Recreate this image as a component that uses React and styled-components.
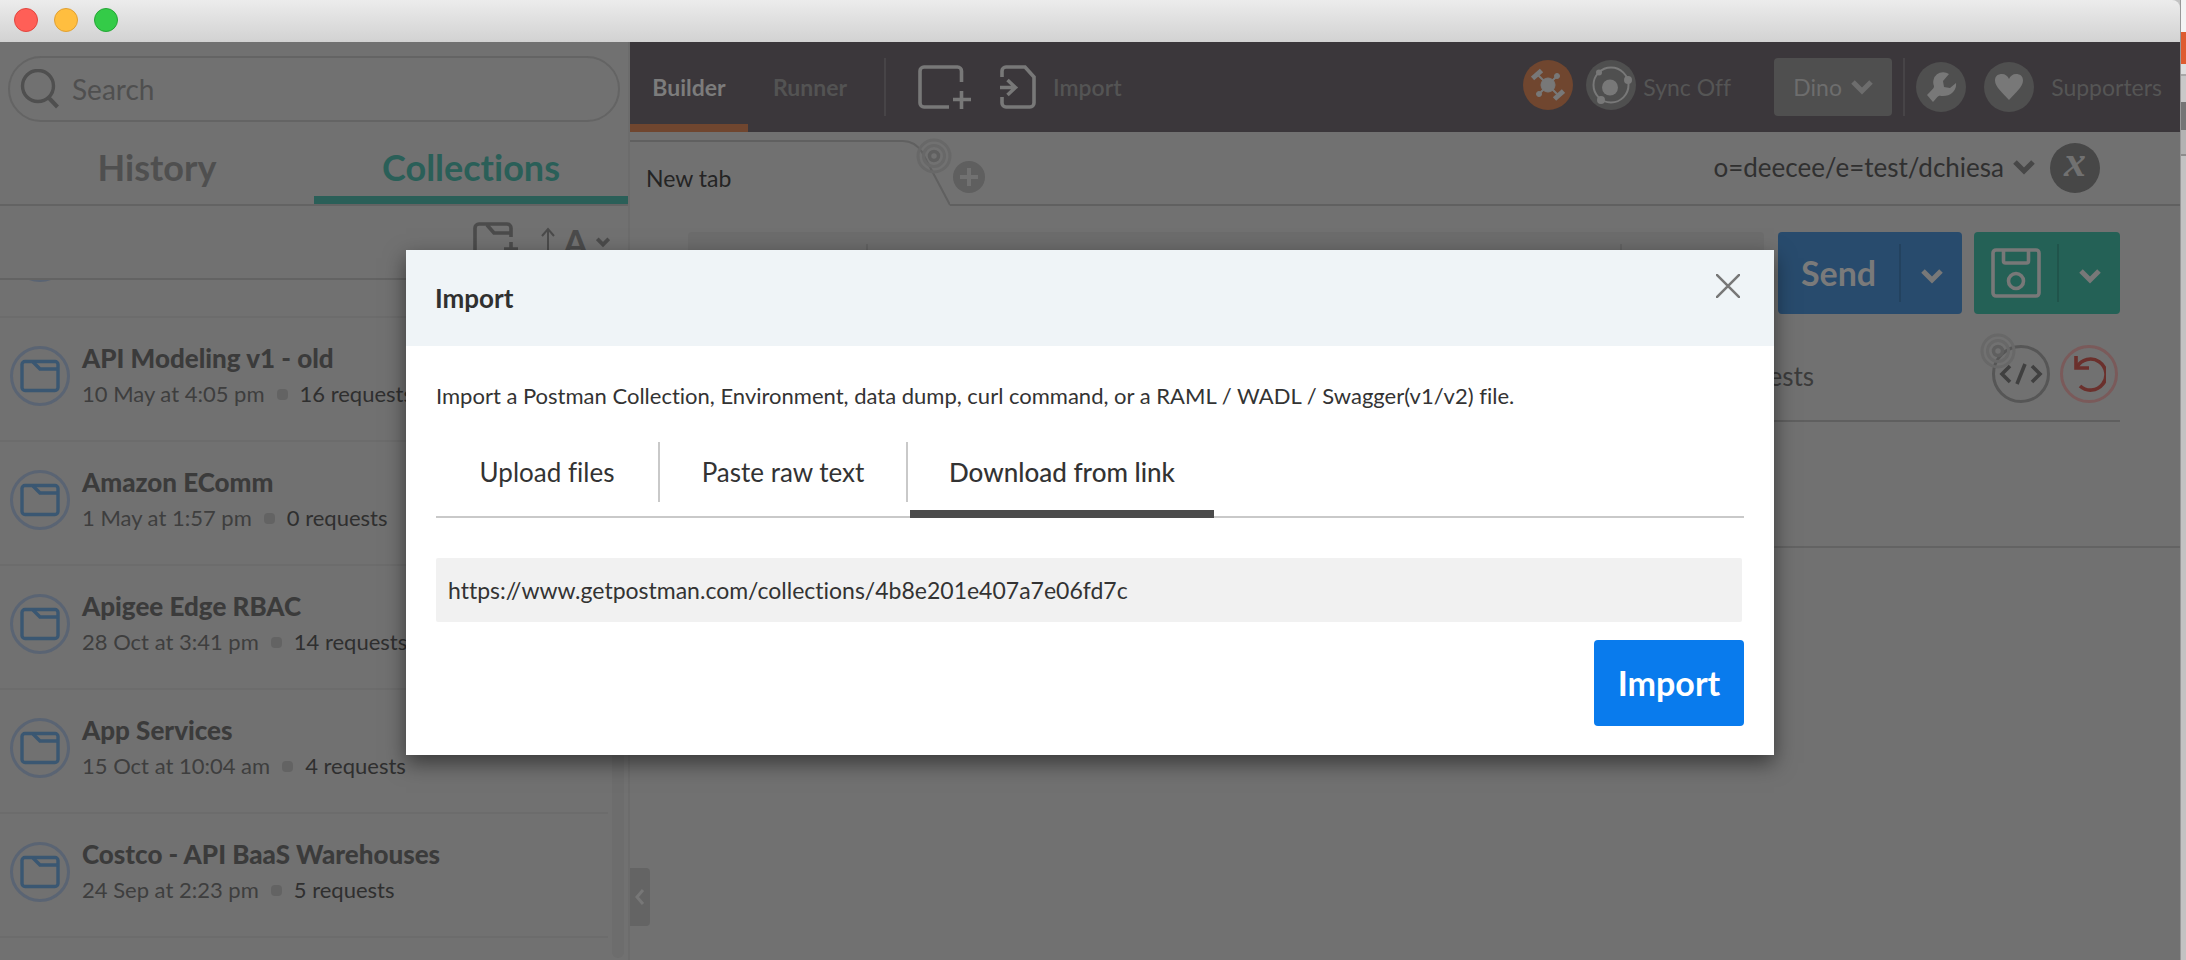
import React, { useLayoutEffect, useRef } from 'react';
import styled, { createGlobalStyle } from 'styled-components';

const Global = createGlobalStyle`
  * { box-sizing: border-box; }
  html, body { margin: 0; height: 100%; }
  #root { height: 100%; }
  body { font-family: Lato, "Liberation Sans", sans-serif; font-variant-ligatures: none; background: #c2c2c2; color: #333; }
  button, input, select { font: inherit; font-variant-ligatures: inherit; color: inherit; margin: 0; }
  button { border: 0; padding: 0; background: none; display: flex; align-items: center; justify-content: center; }
  svg { display: block; flex: none; }
  h1, h2, h3, p, ul { margin: 0; padding: 0; }
`;

const Desktop = styled.div`
  display: flex;
  height: 100%;
  min-height: 800px;
  overflow: hidden;
`;
const Window = styled.div`
  position: relative;
  flex: 1;
  min-width: 0;
  display: flex;
  flex-direction: column;
`;
const Behind = styled.div`
  width: 6px;
  flex: none;
  display: flex;
  flex-direction: column;
  border-left: 1px solid #989898;
`;
const Strip = styled.div`
  height: ${(p) => p.$h}px;
  background: ${(p) => p.$c};
`;

const TitleBar = styled.header`
  height: 42px;
  flex: none;
  display: flex;
  align-items: center;
  gap: 16px;
  padding: 0 14px 2px;
  background: linear-gradient(#ececec, #d2d2d2);
  border-top-right-radius: 8px;
`;
const Light = styled.button`
  width: 24px;
  height: 24px;
  border-radius: 50%;
  background: ${(p) => p.$fill};
  border: 1px solid ${(p) => p.$edge};
`;

const Body = styled.div`
  flex: 1;
  min-height: 0;
  display: flex;
  background: #717171;
`;

const Sidebar = styled.aside`
  width: 630px;
  flex: none;
  display: flex;
  flex-direction: column;
  border-right: 2px solid #6c6c6c;
`;
const SearchBox = styled.label`
  height: 66px;
  flex: none;
  margin: 14px 8px 0;
  padding: 0 10px;
  display: flex;
  align-items: center;
  gap: 12px;
  border: 2px solid #646464;
  border-radius: 33px;
  input {
    flex: 1;
    min-width: 0;
    border: 0;
    padding: 0;
    background: none;
    outline: none;
    font-size: 28px;
    line-height: 36px;
  }
  input::placeholder { color: #4f4f4f; opacity: 1; }
`;
const SideTabs = styled.nav`
  height: 84px;
  flex: none;
  display: flex;
  border-bottom: 2px solid #636363;
`;
const SideTab = styled.button`
  flex: 1;
  font-size: 36px;
  line-height: 40px;
  font-weight: 700;
  padding-top: 16px;
  color: ${(p) => (p.$active ? '#2a5f58' : '#4f4f4f')};
  border-bottom: 8px solid ${(p) => (p.$active ? '#2a5f58' : 'transparent')};
`;
const SideTools = styled.div`
  height: 74px;
  flex: none;
  display: flex;
  justify-content: flex-end;
  align-items: center;
  gap: 22px;
  padding-right: 18px;
  border-bottom: 2px solid #636363;
`;
const SortButton = styled.button`
  gap: 8px;
  color: #4b4b4b;
  font-size: 36px;
  font-weight: 700;
  line-height: 40px;
`;
const ListArea = styled.div`
  flex: 1;
  min-height: 0;
  display: flex;
  gap: 4px;
  padding-right: 4px;
`;
const List = styled.ul`
  flex: 1;
  overflow: hidden;
  list-style: none;
`;
const Track = styled.div`
  width: 12px;
  margin-bottom: 2px;
  border-radius: 6px;
  background: #6d6d6d;
`;
const Row = styled.li`
  height: 124px;
  display: flex;
  align-items: center;
  gap: 12px;
  padding: 0 10px 6px;
  border-bottom: 2px solid #6c6c6c;
`;
const FolderBadge = styled.span`
  width: 60px;
  height: 60px;
  flex: none;
  display: flex;
  align-items: center;
  justify-content: center;
  border: 3px solid #5a6473;
  border-radius: 50%;
`;
const RowText = styled.div`
  display: flex;
  flex-direction: column;
  gap: 4px;
`;
const RowTitle = styled.h3`
  font-size: 26px;
  line-height: 32px;
  font-weight: 900;
  color: #3b3b3b;
  white-space: nowrap;
`;
const RowMeta = styled.p`
  display: flex;
  align-items: center;
  gap: 12px;
  font-size: 22px;
  line-height: 32px;
  color: #3e3e3e;
  white-space: nowrap;
  i { width: 11px; height: 11px; border-radius: 4px; background: #636363; }
  span:last-child { color: #2f2f2f; }
`;

const Main = styled.main`
  position: relative;
  flex: 1;
  min-width: 0;
  display: flex;
  flex-direction: column;
`;
const TopBar = styled.div`
  height: 90px;
  flex: none;
  display: flex;
  align-items: center;
  background: #3b373b;
  font-size: 23px;
  line-height: 32px;
  color: #555;
`;
const ModeTab = styled.button`
  align-self: stretch;
  width: ${(p) => p.$w}px;
  font-weight: 700;
  padding-top: 8px;
  color: ${(p) => (p.$active ? '#7c7c7c' : '#535353')};
  border-bottom: 8px solid ${(p) => (p.$active ? '#70462f' : 'transparent')};
`;
const Rule = styled.span`
  width: 2px;
  height: 58px;
  flex: none;
  margin-left: ${(p) => p.$ml || 0}px;
  background: ${(p) => p.$c || '#474447'};
`;
const ToolButton = styled.button`
  margin-left: ${(p) => p.$ml || 0}px;
  gap: 17px;
  font-weight: 600;
  color: #545454;
`;
const Spacer = styled.span`
  flex: 1;
`;
const StatusIcons = styled.div`
  display: flex;
  gap: 13px;
  padding-bottom: 4px;
`;
const Round = styled.button`
  width: 50px;
  height: 50px;
  flex: none;
  margin-left: ${(p) => p.$ml || 0}px;
  border-radius: 50%;
  background: ${(p) => p.$c};
`;
const VarGlyph = styled.span`
  font-family: "Liberation Serif", serif;
  font-size: 44px;
  line-height: 44px;
  font-weight: 700;
  font-style: italic;
  color: #717171;
  padding-bottom: 12px;
`;
const BarText = styled.span`
  margin-left: ${(p) => p.$ml}px;
  margin-right: ${(p) => p.$mr}px;
  white-space: nowrap;
`;
const UserButton = styled.button`
  width: 118px;
  height: 58px;
  gap: 9px;
  margin-right: 11px;
  border-radius: 4px;
  background: #4f4f4f;
  color: #6d6d6d;
`;

const TabRow = styled.div`
  height: 74px;
  flex: none;
  display: flex;
  align-items: stretch;
`;
const RequestTab = styled.div`
  position: relative;
  width: 320px;
  flex: none;
  display: flex;
  align-items: center;
  padding: 18px 16px 0;
  font-size: 23px;
  line-height: 32px;
  color: #242424;
`;
const TabOutline = styled.svg`
  position: absolute;
  left: 0;
  top: 0;
`;
const TabRest = styled.div`
  flex: 1;
  display: flex;
  align-items: center;
  padding: 0 80px 0 3px;
  border-bottom: 2px solid #606060;
`;
const AddTab = styled.button`
  width: 32px;
  height: 32px;
  margin-top: 18px;
  border-radius: 50%;
  background: #5f5f5f;
`;
const EnvPicker = styled.button`
  gap: 9px;
  font-size: 26px;
  line-height: 32px;
  color: #303030;
  margin-right: 15px;
  padding-bottom: 2px;
`;

const RequestRow = styled.div`
  display: flex;
  gap: 12px;
  padding: 26px 60px 0 58px;
`;
const UrlBar = styled.div`
  flex: 1;
  height: 82px;
  display: flex;
  align-items: center;
  justify-content: space-between;
  padding: 0 142px 0 178px;
  margin-right: 2px;
  border-radius: 4px;
  background: #6c6c6c;
`;
const Split = styled.div`
  height: 82px;
  display: flex;
  align-items: center;
  border-radius: 4px;
  background: ${(p) => p.$c};
  color: #7a7a7a;
`;
const SplitMain = styled.button`
  align-self: stretch;
  width: ${(p) => p.$w}px;
  font-size: 34px;
  line-height: 40px;
  font-weight: 700;
`;
const SplitMore = styled.button`
  align-self: stretch;
  width: 61px;
  padding-top: 6px;
`;
const SubTabs = styled.div`
  height: 108px;
  flex: none;
  display: flex;
  align-items: center;
  gap: 10px;
  margin: 0 60px 0 58px;
  padding-right: 2px;
  padding-top: 14px;
  border-bottom: 2px solid #5f5f5f;
`;
const SubTab = styled.button`
  margin-right: 168px;
  padding-top: 4px;
  font-size: 26px;
  line-height: 32px;
  color: #3b3b3b;
`;
const Outline = styled.button`
  position: relative;
  width: 58px;
  height: 58px;
  border-radius: 50%;
  border: 3px solid ${(p) => p.$c};
`;
const Beacon = styled.span`
  position: absolute;
  left: ${(p) => p.$x}px;
  top: ${(p) => p.$y}px;
`;
const AuthArea = styled.div`
  height: 126px;
  flex: none;
  border-bottom: 2px solid #636363;
`;
const Handle = styled.button`
  position: absolute;
  left: 0;
  bottom: 34px;
  width: 20px;
  height: 58px;
  border-radius: 0 4px 4px 0;
  background: #646464;
`;

const Dialog = styled.section`
  position: absolute;
  left: 406px;
  right: 406px;
  top: 250px;
  display: flex;
  flex-direction: column;
  background: #fff;
  box-shadow: 0 8px 20px rgba(0, 0, 0, 0.5);
`;
const DialogHead = styled.header`
  height: 96px;
  display: flex;
  justify-content: space-between;
  align-items: flex-start;
  padding: 24px 34px 0 29px;
  background: #eff4f7;
  h2 { font-size: 26px; line-height: 32px; font-weight: 700; color: #303030; padding-top: 8px; }
`;
const DialogBody = styled.form`
  display: flex;
  flex-direction: column;
  padding: 34px 30px 29px;
  color: #333;
`;
const Intro = styled.p`
  font-size: 22px;
  line-height: 32px;
`;
const DialogTabs = styled.nav`
  height: 76px;
  margin-top: 30px;
  display: flex;
  align-items: flex-start;
  border-bottom: 2px solid #c9c9c9;
`;
const DialogTab = styled.button`
  width: ${(p) => p.$w}px;
  height: ${(p) => (p.$active ? 76 : 60)}px;
  font-size: 26px;
  line-height: 32px;
  font-weight: ${(p) => (p.$active ? 500 : 400)};
  border-bottom: ${(p) => (p.$active ? '8px solid #4b4b4b' : '0')};
  padding-bottom: ${(p) => (p.$active ? 8 : 0)}px;
  border-right: ${(p) => (p.$active ? '0' : '2px solid #c9c9c9')};
  margin-left: ${(p) => (p.$active ? 2 : 0)}px;
`;
const LinkField = styled.div`
  display: flex;
  padding: 40px 2px 18px 0;
  input {
    flex: 1;
    height: 64px;
    padding: 0 12px;
    border: 0;
    border-radius: 2px;
    outline: none;
    background: #f1f1f1;
    font-size: 23px;
  }
`;
const Submit = styled.button`
  align-self: flex-end;
  width: 150px;
  height: 86px;
  border-radius: 4px;
  background: #097bed;
  color: #fff;
  font-size: 34px;
  line-height: 40px;
  font-weight: 700;
`;

const Chevron = ({ c, w = 22, s = 5 }) => (
  <svg width={w} height="16" viewBox="0 0 22 16" fill="none" stroke={c} strokeWidth={s}>
    <path d="M2 3l9 9 9-9" />
  </svg>
);
const Folder = () => (
  <svg width="40" height="34" viewBox="0 0 40 34" fill="none" stroke="#3a5772" strokeWidth="3.4">
    <rect x="2" y="2.5" width="36" height="29" rx="3" />
    <path d="M13 3l7 7h18" />
  </svg>
);
const Rings = () => (
  <svg width="36" height="36" viewBox="0 0 36 36" fill="none" stroke="#686868" strokeWidth="3">
    <circle cx="18" cy="18" r="16" />
    <circle cx="18" cy="18" r="10.5" />
    <circle cx="18" cy="18" r="4.5" stroke="#5f5f5f" strokeWidth="3.5" />
  </svg>
);

const collections = [
  { title: 'API Modeling v1 - old', date: '10 May at 4:05 pm', count: '16 requests' },
  { title: 'Amazon EComm', date: '1 May at 1:57 pm', count: '0 requests' },
  { title: 'Apigee Edge RBAC', date: '28 Oct at 3:41 pm', count: '14 requests' },
  { title: 'App Services', date: '15 Oct at 10:04 am', count: '4 requests' },
  { title: 'Costco - API BaaS Warehouses', date: '24 Sep at 2:23 pm', count: '5 requests' },
];

function CollectionList() {
  const ref = useRef(null);
  useLayoutEffect(() => {
    ref.current.scrollTop = 86;
  }, []);
  return (
    <ListArea>
      <List ref={ref}>
        <Row><FolderBadge><Folder /></FolderBadge></Row>
        {collections.map((c) => (
          <Row key={c.title}>
            <FolderBadge><Folder /></FolderBadge>
            <RowText>
              <RowTitle>{c.title}</RowTitle>
              <RowMeta><span>{c.date}</span><i /><span>{c.count}</span></RowMeta>
            </RowText>
          </Row>
        ))}
        <Row />
      </List>
      <Track />
    </ListArea>
  );
}

function SidebarPanel() {
  return (
    <Sidebar>
      <SearchBox>
        <svg width="40" height="40" viewBox="0 0 40 40" fill="none" stroke="#4f4f4f">
          <circle cx="18" cy="17" r="15.5" strokeWidth="3.4" />
          <path d="M28 28l9.500 10" strokeWidth="4" />
        </svg>
        <input type="text" placeholder="Search" aria-label="Search" />
      </SearchBox>
      <SideTabs>
        <SideTab>History</SideTab>
        <SideTab $active>Collections</SideTab>
      </SideTabs>
      <SideTools>
        <button aria-label="New collection">
          <svg width="46" height="40" viewBox="0 0 46 40" fill="none" stroke="#4b4b4b" strokeWidth="3.6">
            <path d="M38 15V6a4 4 0 0 0-4-4H6a4 4 0 0 0-4 4v28a4 4 0 0 0 4 4h20M14 3l7 8h16M38 20v14M31 27h14" />
          </svg>
        </button>
        <SortButton aria-label="Sort">
          <svg width="14" height="34" viewBox="0 0 14 34" fill="none" stroke="#4b4b4b" strokeWidth="2">
            <path d="M7 34V4M1 11l6-7 6 7" />
          </svg>
          <span>A</span>
          <Chevron c="#4b4b4b" w={14} s={6} />
        </SortButton>
      </SideTools>
      <CollectionList />
    </Sidebar>
  );
}

function Toolbar() {
  return (
    <TopBar>
      <ModeTab $w={118} $active>Builder</ModeTab>
      <ModeTab $w={124}>Runner</ModeTab>
      <Rule $ml={12} />
      <ToolButton $ml={32} aria-label="New window">
        <svg width="54" height="44" viewBox="0 0 54 44" fill="none" stroke="#787878" strokeWidth="3.6">
          <path d="M43.500 17V6a4 4 0 0 0-4-4H6a4 4 0 0 0-4 4v32a4 4 0 0 0 4 4h25M43.500 26v18M35 34.500h18" />
        </svg>
      </ToolButton>
      <ToolButton $ml={28}>
        <svg width="36" height="44" viewBox="0 0 36 44" fill="none" stroke="#787878" strokeWidth="3.600">
          <path d="M2 12V6a4 4 0 0 1 4-4h19l9 10v26a4 4 0 0 1-4 4H6a4 4 0 0 1-4-4v-6" />
          <path d="M0 22.500h14M7.500 15l8 7.500-8 7.500" />
        </svg>
        Import
      </ToolButton>
      <Spacer />
      <StatusIcons>
        <Round $c="#70462f" aria-label="Interceptor">
          <svg width="34" height="34" viewBox="0 0 34 34" fill="#787878" stroke="#787878">
            <path d="M6 6l22 22M26 8L8 26" strokeWidth="2" />
            <circle cx="17" cy="17" r="7" />
            <circle cx="26" cy="8" r="2.500" /><circle cx="8" cy="26" r="2.500" />
            <path d="M1.500 10.500l9-8M23.500 31l9-8" strokeWidth="5" />
          </svg>
        </Round>
        <Round $c="#4f4f4f" aria-label="Sync">
          <svg width="42" height="42" viewBox="0 0 42 42" fill="#787878">
            <circle cx="21" cy="21" r="17.500" fill="none" stroke="#787878" strokeWidth="2" />
            <circle cx="20" cy="23.500" r="8" /><circle cx="38" cy="16" r="4" /><circle cx="9" cy="8.500" r="3" /><circle cx="11" cy="36" r="4" />
          </svg>
        </Round>
      </StatusIcons>
      <BarText $ml={7} $mr={43}>Sync Off</BarText>
      <UserButton>Dino <Chevron c="#6d6d6d" /></UserButton>
      <Rule />
      <Round $ml={11} $c="#4f4f4f" aria-label="Settings">
        <svg width="32" height="32" viewBox="0 0 32 32" fill="#787878">
          <path d="M24 3a10 10 0 0 0-15 12c0 2-1 3-7 9l6 7c4-4 5-7 8-6 9 1 16-5 15-13l-6 5-6-1-1-6z" />
        </svg>
      </Round>
      <Round $ml={18} $c="#4f4f4f" aria-label="Favourites">
        <svg width="30" height="28" viewBox="0 0 30 28" fill="#787878">
          <path d="M15 27C9 20 1 14 1 7.500 1 3 4 1 8 1c3 0 6 2 7 5 1-3 4-5 7-5 4 0 7 2 7 6.500C29 14 21 20 15 27z" />
        </svg>
      </Round>
      <BarText $ml={17} $mr={18}>Supporters</BarText>
    </TopBar>
  );
}

function Tabs() {
  return (
    <TabRow>
      <RequestTab>
        <TabOutline width="320" height="74" viewBox="0 0 320 74" fill="none" stroke="#606060" strokeWidth="2">
          <path d="M0 9h273c9 0 15 5 19 11l28 53" />
        </TabOutline>
        New tab
        <Beacon $x={286} $y={6}><Rings /></Beacon>
      </RequestTab>
      <TabRest>
        <AddTab aria-label="Add tab">
          <svg width="18" height="18" viewBox="0 0 18 18" stroke="#717171" strokeWidth="4"><path d="M9 0v18M0 9h18" /></svg>
        </AddTab>
        <Spacer />
        <EnvPicker>o=deecee/e=test/dchiesa <Chevron c="#474747" /></EnvPicker>
        <Round $c="#474747" aria-label="Variables"><VarGlyph>x</VarGlyph></Round>
      </TabRest>
    </TabRow>
  );
}

function Request() {
  return (
    <>
      <RequestRow>
        <UrlBar><Rule $c="#626262" /><Rule $c="#626262" /></UrlBar>
        <Split $c="#284b6d">
          <SplitMain $w={121}>Send</SplitMain>
          <Rule $c="#23425f" />
          <SplitMore aria-label="Send options"><Chevron c="#787878" /></SplitMore>
        </Split>
        <Split $c="#246156">
          <SplitMain $w={83} aria-label="Save">
            <svg width="50" height="50" viewBox="0 0 50 50" fill="none" stroke="#787878" strokeWidth="3.600">
              <rect x="2" y="2" width="46" height="46" rx="3" />
              <path d="M12.500 2v11a2 2 0 0 0 2 2h21a2 2 0 0 0 2-2V2" />
              <circle cx="25" cy="33" r="7.500" />
            </svg>
          </SplitMain>
          <Rule $c="#20544b" />
          <SplitMore aria-label="Save options"><Chevron c="#787878" /></SplitMore>
        </Split>
      </RequestRow>
      <SubTabs>
        <Spacer />
        <SubTab>Tests</SubTab>
        <Outline $c="#565656" aria-label="Generate code">
          <svg width="44" height="22" viewBox="0 0 44 22" fill="none" stroke="#404040" strokeWidth="3.600">
            <path d="M11 3l-8 8 8 8M26 1l-8 20M33 3l8 8-8 8" />
          </svg>
          <Beacon $x={-15} $y={-15}><Rings /></Beacon>
        </Outline>
        <Outline $c="#7a5a5a" aria-label="Reset">
          <svg width="34" height="38" viewBox="0 0 34 38" fill="none" stroke="#6b302c" strokeWidth="3.600">
            <path d="M5 12A15.500 15.500 0 1 1 8 31" />
            <path d="M4 1v12h13" />
          </svg>
        </Outline>
      </SubTabs>
      <AuthArea />
    </>
  );
}

function ImportDialog() {
  return (
    <Dialog role="dialog" aria-labelledby="import-title">
      <DialogHead>
        <h2 id="import-title">Import</h2>
        <button aria-label="Close">
          <svg width="24" height="24" viewBox="0 0 24 24" stroke="#777" strokeWidth="2.500"><path d="M0 0l24 24M24 0L0 24" /></svg>
        </button>
      </DialogHead>
      <DialogBody onSubmit={(e) => e.preventDefault()}>
        <Intro>Import a Postman Collection, Environment, data dump, curl command, or a RAML / WADL / Swagger(v1/v2) file.</Intro>
        <DialogTabs>
          <DialogTab type="button" $w={224}>Upload files</DialogTab>
          <DialogTab type="button" $w={248}>Paste raw text</DialogTab>
          <DialogTab type="button" $w={304} $active>Download from link</DialogTab>
        </DialogTabs>
        <LinkField>
          <input type="text" aria-label="Collection link" defaultValue="https://www.getpostman.com/collections/4b8e201e407a7e06fd7c" />
        </LinkField>
        <Submit type="submit">Import</Submit>
      </DialogBody>
    </Dialog>
  );
}

export default function App() {
  return (
    <Desktop>
      <Global />
      <Window>
        <TitleBar>
          <Light aria-label="Close window" $fill="#ff5f57" $edge="#e2463f" />
          <Light aria-label="Minimize window" $fill="#ffbe3f" $edge="#e0a033" />
          <Light aria-label="Zoom window" $fill="#34cb48" $edge="#25a636" />
        </TitleBar>
        <Body>
          <SidebarPanel />
          <Main>
            <Toolbar />
            <Tabs />
            <Request />
            <Handle aria-label="Collapse sidebar">
              <svg width="10" height="16" viewBox="0 0 10 16" fill="none" stroke="#777" strokeWidth="3"><path d="M8 1L2 8l6 7" /></svg>
            </Handle>
          </Main>
        </Body>
        <ImportDialog />
      </Window>
      <Behind>
        <Strip $h={32} $c="#f4f4f4" />
        <Strip $h={32} $c="#de5b2f" />
        <Strip $h={10} $c="#dedede" />
        <Strip $h={2} $c="#a8a8a8" />
        <Strip $h={26} $c="#c8c8c8" />
        <Strip $h={28} $c="#757575" />
        <Strip $h={24} $c="#b2b2b2" />
        <Strip $h={2} $c="#8c8c8c" />
      </Behind>
    </Desktop>
  );
}
